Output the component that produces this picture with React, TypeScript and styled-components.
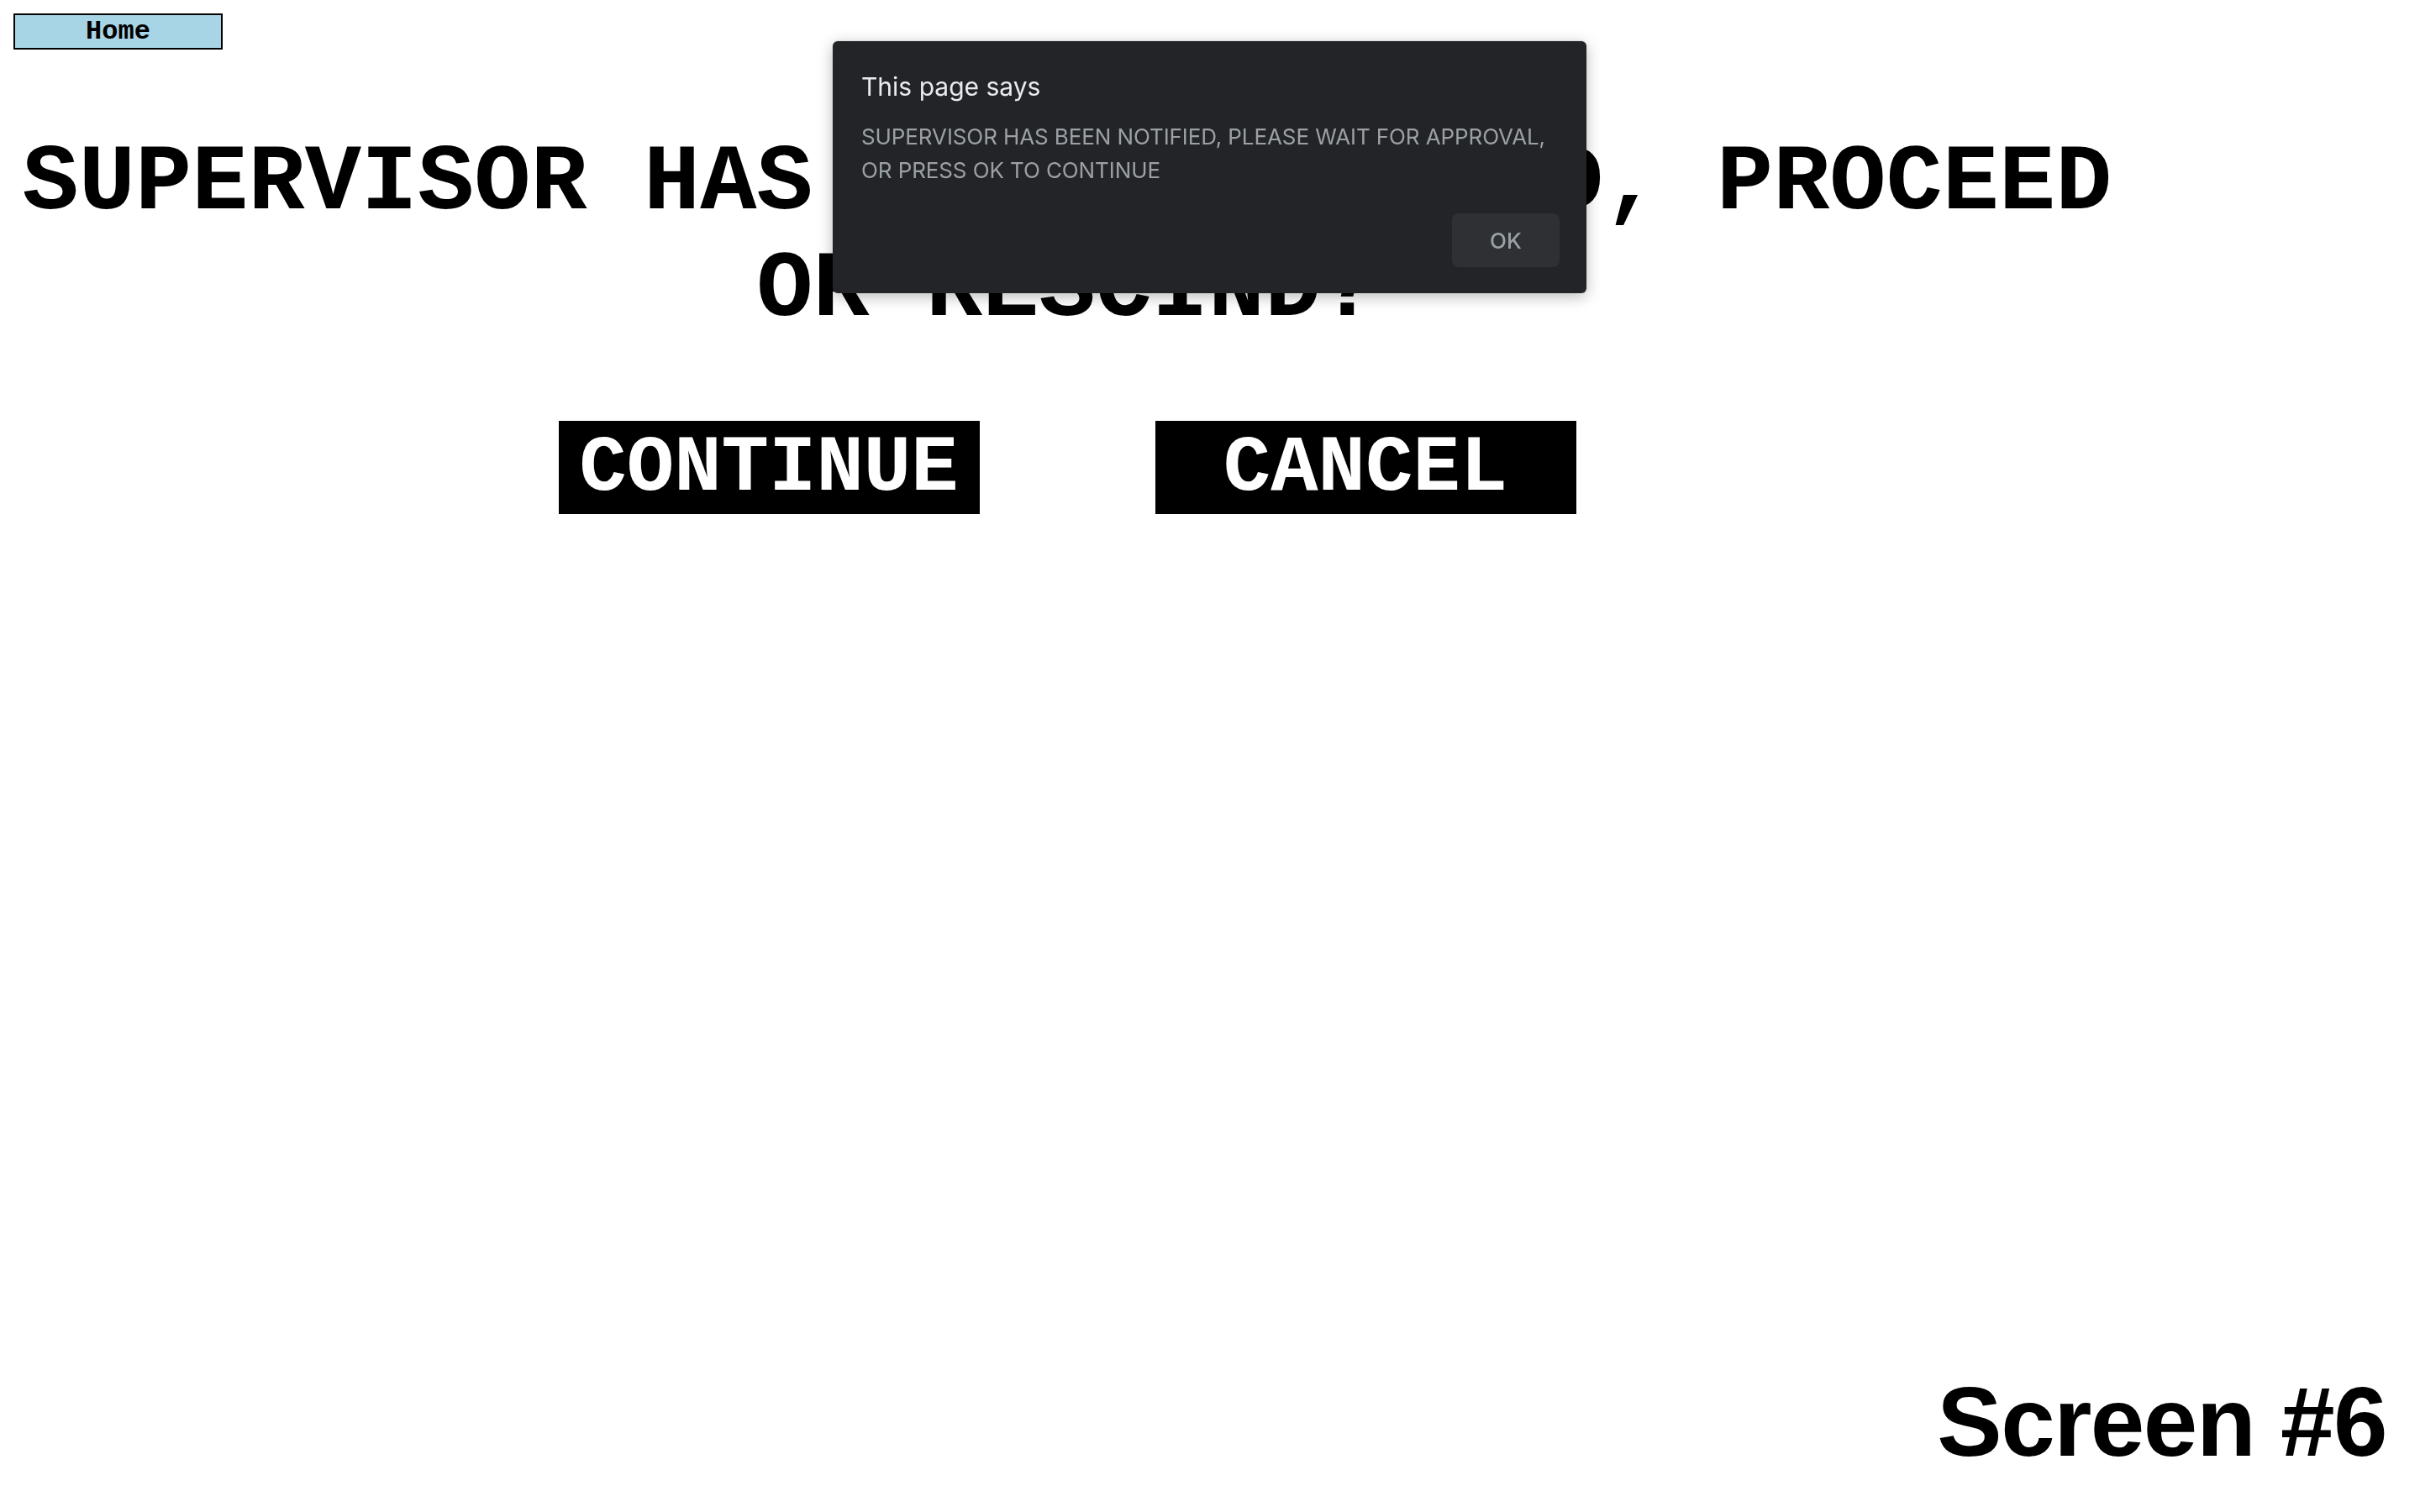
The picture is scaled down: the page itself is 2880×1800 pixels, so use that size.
import styled, { createGlobalStyle } from "styled-components";

const GlobalStyle = createGlobalStyle`
  html, body {
    margin: 0;
    padding: 0;
    background: #ffffff;
  }
  body {
    margin: 16px;
    font-family: "Liberation Mono", "Courier New", monospace;
    color: #000000;
  }
`;

const Page = styled.div`
  min-height: calc(100vh - 32px);
  display: flex;
  flex-direction: column;
  align-items: flex-start;
`;

const HomeButton = styled.button`
  width: 249px;
  height: 43px;
  margin: 0;
  padding: 0;
  box-sizing: border-box;
  border: 2px solid #000000;
  background: #a8d5e5;
  font-family: "Liberation Mono", "Courier New", monospace;
  font-weight: bold;
  font-size: 32px;
  line-height: 37px;
  color: #000000;
  cursor: pointer;
`;

const Main = styled.main`
  width: 2508px;
  text-align: center;
`;

const Heading = styled.h1`
  margin: 96px 0 0;
  font-family: "Liberation Mono", "Courier New", monospace;
  font-weight: bold;
  font-size: 112px;
  line-height: 127px;
`;

const ButtonRow = styled.div`
  display: flex;
  justify-content: center;
  gap: 209px;
  margin-top: 92px;
`;

const ActionButton = styled.button`
  width: 501px;
  height: 111px;
  padding: 4px 0 0;
  border: none;
  background: #000000;
  color: #ffffff;
  font-family: "Liberation Mono", "Courier New", monospace;
  font-weight: bold;
  font-size: 94px;
  line-height: 107px;
  cursor: pointer;
`;

const ScreenLabel = styled.div`
  margin-top: auto;
  align-self: flex-end;
  margin-right: 24px;
  margin-bottom: 26px;
  font-family: "Liberation Sans", Arial, sans-serif;
  font-weight: bold;
  font-size: 116px;
  letter-spacing: -1.5px;
  line-height: 130px;
`;

const AlertDialog = styled.div`
  position: fixed;
  top: 49px;
  left: 991px;
  width: 897px;
  box-sizing: border-box;
  padding: 36px 32px 31px 34px;
  background: #232427;
  border-radius: 6px;
  box-shadow: 0 4px 18px rgba(0, 0, 0, 0.28), 0 0 2px rgba(0, 0, 0, 0.2);
  font-family: Inter, "Noto Sans", sans-serif;
  display: flex;
  flex-direction: column;
`;

const AlertTitle = styled.div`
  font-size: 30px;
  line-height: 36px;
  color: #e8eaed;
`;

const AlertMessage = styled.div`
  margin-top: 22px;
  font-size: 26px;
  letter-spacing: -0.1px;
  line-height: 40px;
  color: #9aa0a6;
  white-space: pre-line;
`;

const AlertFooter = styled.div`
  display: flex;
  justify-content: flex-end;
  margin-top: 31px;
`;

const OkButton = styled.button`
  width: 128px;
  height: 64px;
  border: none;
  border-radius: 8px;
  background: #2f3033;
  color: #9aa0a6;
  font-family: Inter, "Noto Sans", sans-serif;
  font-size: 26px;
  font-weight: 500;
  cursor: pointer;
`;

const App = () => {
  return (
    <>
      <GlobalStyle />
      <Page>
        <HomeButton>Home</HomeButton>
        <Main>
          <Heading>SUPERVISOR HAS BEEN NOTIFIED, PROCEED OR RESCIND?</Heading>
          <ButtonRow>
            <ActionButton>CONTINUE</ActionButton>
            <ActionButton>CANCEL</ActionButton>
          </ButtonRow>
        </Main>
        <ScreenLabel>Screen #6</ScreenLabel>
      </Page>
      <AlertDialog role="alertdialog">
        <AlertTitle>This page says</AlertTitle>
        <AlertMessage>
          {"SUPERVISOR HAS BEEN NOTIFIED, PLEASE WAIT FOR APPROVAL,\nOR PRESS OK TO CONTINUE"}
        </AlertMessage>
        <AlertFooter>
          <OkButton>OK</OkButton>
        </AlertFooter>
      </AlertDialog>
    </>
  );
};

export default App;
